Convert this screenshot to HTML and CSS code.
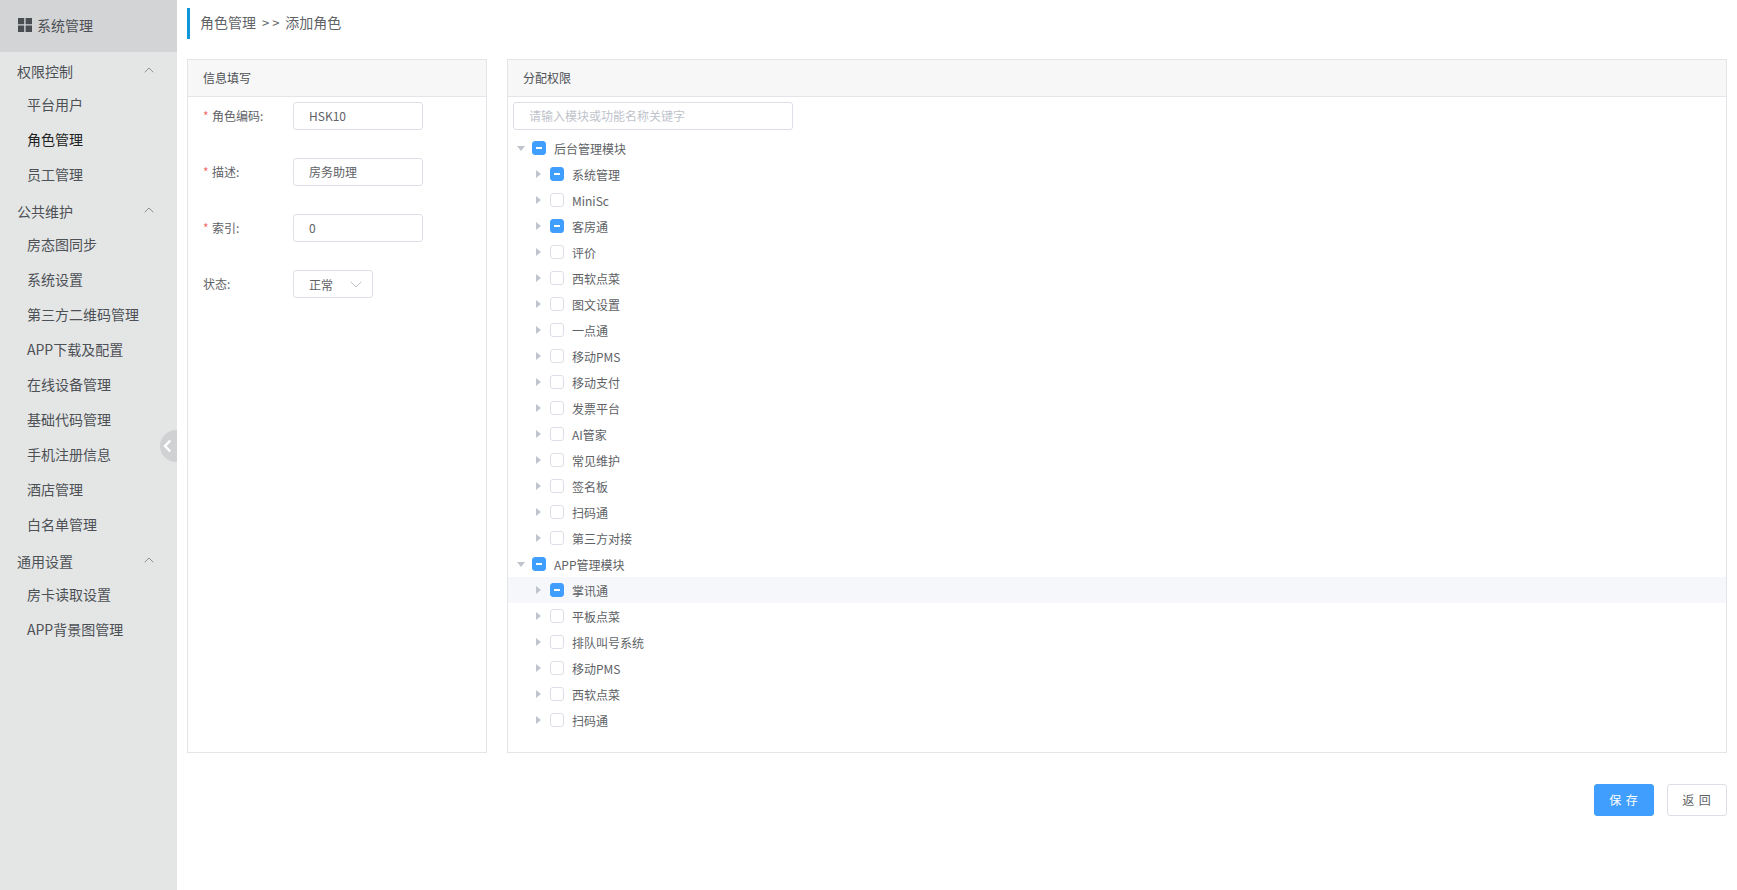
FILE: index.html
```html
<!DOCTYPE html>
<html lang="zh-CN">
<head>
    <meta charset="UTF-8">
    <title>添加角色</title>
    <link rel="stylesheet" href="styles.css">
</head>
<body>
    <!-- 左侧菜单 -->
    <aside class="sidebar">
        <div class="sidebar-head">
            <svg class="grid-icon" width="14" height="14" viewBox="0 0 14 14"><path d="M0 0h6.2v6.2H0zM7.6 0H14v6.2H7.6zM0 7.6h6.2V14H0zM7.6 7.6H14V14H7.6z" fill="#4a4d52"/></svg>
            <span>系统管理</span>
        </div>
        <nav class="menu">
            <div class="menu-group">权限控制<svg class="chevron" width="10" height="6" viewBox="0 0 10 6"><path d="M.7 5.3 5 1l4.3 4.3" fill="none" stroke="#8d9095"/></svg></div>
            <a class="menu-item">平台用户</a>
            <a class="menu-item active">角色管理</a>
            <a class="menu-item">员工管理</a>
            <div class="menu-group">公共维护<svg class="chevron" width="10" height="6" viewBox="0 0 10 6"><path d="M.7 5.3 5 1l4.3 4.3" fill="none" stroke="#8d9095"/></svg></div>
            <a class="menu-item">房态图同步</a>
            <a class="menu-item">系统设置</a>
            <a class="menu-item">第三方二维码管理</a>
            <a class="menu-item">APP下载及配置</a>
            <a class="menu-item">在线设备管理</a>
            <a class="menu-item">基础代码管理</a>
            <a class="menu-item">手机注册信息</a>
            <a class="menu-item">酒店管理</a>
            <a class="menu-item">白名单管理</a>
            <div class="menu-group">通用设置<svg class="chevron" width="10" height="6" viewBox="0 0 10 6"><path d="M.7 5.3 5 1l4.3 4.3" fill="none" stroke="#8d9095"/></svg></div>
            <a class="menu-item">房卡读取设置</a>
            <a class="menu-item">APP背景图管理</a>
        </nav>
        <div class="collapse-btn">
            <svg width="9" height="14" viewBox="0 0 9 14"><path d="M7.2 1.5 2 7l5.2 5.5" fill="none" stroke="#fff" stroke-width="2.4"/></svg>
        </div>
    </aside>

    <main class="main">
        <div class="crumb">角色管理<span class="crumb-sep">&gt; &gt;</span>添加角色</div>

        <div class="cards">
            <!-- 信息填写 -->
            <section class="card card-info">
                <div class="card-head">信息填写</div>
                <div class="form">
                    <div class="form-row">
                        <label class="form-label"><i>*</i>角色编码:</label>
                        <input class="text-input" type="text" value="HSK10">
                    </div>
                    <div class="form-row">
                        <label class="form-label"><i>*</i>描述:</label>
                        <input class="text-input" type="text" value="房务助理">
                    </div>
                    <div class="form-row">
                        <label class="form-label"><i>*</i>索引:</label>
                        <input class="text-input" type="text" value="0">
                    </div>
                    <div class="form-row">
                        <label class="form-label">状态:</label>
                        <div class="select">
                            <span>正常</span>
                            <svg width="12" height="7" viewBox="0 0 12 7"><path d="M.7.7 6 6l5.3-5.3" fill="none" stroke="#c0c4cc"/></svg>
                        </div>
                    </div>
                </div>
            </section>

            <!-- 分配权限 -->
            <section class="card card-tree">
                <div class="card-head">分配权限</div>
                <div class="search-wrap">
                    <input class="search-input" type="text" placeholder="请输入模块或功能名称关键字">
                </div>
                <ul class="tree">
                    <li class="tree-row top"><b class="arrow-down"></b><b class="check half"></b>后台管理模块</li>
                    <li class="tree-row"><b class="arrow-right"></b><b class="check half"></b>系统管理</li>
                    <li class="tree-row"><b class="arrow-right"></b><b class="check"></b>MiniSc</li>
                    <li class="tree-row"><b class="arrow-right"></b><b class="check half"></b>客房通</li>
                    <li class="tree-row"><b class="arrow-right"></b><b class="check"></b>评价</li>
                    <li class="tree-row"><b class="arrow-right"></b><b class="check"></b>西软点菜</li>
                    <li class="tree-row"><b class="arrow-right"></b><b class="check"></b>图文设置</li>
                    <li class="tree-row"><b class="arrow-right"></b><b class="check"></b>一点通</li>
                    <li class="tree-row"><b class="arrow-right"></b><b class="check"></b>移动PMS</li>
                    <li class="tree-row"><b class="arrow-right"></b><b class="check"></b>移动支付</li>
                    <li class="tree-row"><b class="arrow-right"></b><b class="check"></b>发票平台</li>
                    <li class="tree-row"><b class="arrow-right"></b><b class="check"></b>AI管家</li>
                    <li class="tree-row"><b class="arrow-right"></b><b class="check"></b>常见维护</li>
                    <li class="tree-row"><b class="arrow-right"></b><b class="check"></b>签名板</li>
                    <li class="tree-row"><b class="arrow-right"></b><b class="check"></b>扫码通</li>
                    <li class="tree-row"><b class="arrow-right"></b><b class="check"></b>第三方对接</li>
                    <li class="tree-row top"><b class="arrow-down"></b><b class="check half"></b>APP管理模块</li>
                    <li class="tree-row hover"><b class="arrow-right"></b><b class="check half"></b>掌讯通</li>
                    <li class="tree-row"><b class="arrow-right"></b><b class="check"></b>平板点菜</li>
                    <li class="tree-row"><b class="arrow-right"></b><b class="check"></b>排队叫号系统</li>
                    <li class="tree-row"><b class="arrow-right"></b><b class="check"></b>移动PMS</li>
                    <li class="tree-row"><b class="arrow-right"></b><b class="check"></b>西软点菜</li>
                    <li class="tree-row"><b class="arrow-right"></b><b class="check"></b>扫码通</li>
                </ul>
            </section>
        </div>

        <div class="actions">
            <button class="btn btn-primary">保 存</button>
            <button class="btn">返 回</button>
        </div>
    </main>
</body>
</html>
```

FILE: styles.css
```css
/* 通用 */
* {
    box-sizing: border-box;
}
html, body {
    height: 100%;
}
body {
    margin: 0;
    display: flex;
    font-family: "Noto Sans CJK SC", "Noto Sans", sans-serif;
    font-size: 12px;
    color: #606266;
    background-color: #ffffff;
    overflow: hidden;
}
/* 左侧菜单 */
.sidebar {
    position: relative;
    flex: 0 0 177px;
    background-color: #e4e6e6;
}
.sidebar-head {
    height: 52px;
    padding: 0 0 2px 18px;
    display: flex;
    align-items: center;
    gap: 5px;
    font-size: 14px;
    color: #4d5055;
    background-color: #d3d4d6;
}
.menu {
    padding-top: 1px;
}
.menu-group {
    height: 35px;
    padding: 0 23px 0 17px;
    display: flex;
    align-items: center;
    justify-content: space-between;
    font-size: 14px;
    color: #4d5055;
}
.chevron {
    margin-top: -2px;
}
.menu-item {
    display: block;
    height: 35px;
    line-height: 32px;
    padding-left: 27px;
    font-size: 14px;
    color: #4d5055;
}
.menu-item.active {
    color: #222222;
}
/* 折叠按钮 */
.collapse-btn {
    position: absolute;
    top: 430px;
    right: 0;
    width: 17px;
    height: 32px;
    padding-left: 3px;
    display: flex;
    align-items: center;
    background-color: #d0d1d3;
    border-radius: 16px 0 0 16px;
}
/* 主内容 */
.main {
    flex: 1;
    min-width: 0;
    padding: 8px 10px 0;
}
.crumb {
    height: 31px;
    padding-left: 10px;
    line-height: 29px;
    font-size: 14px;
    color: #606266;
    border-left: 3px solid #1296db;
}
.crumb-sep {
    margin: 0 6px 0 6px;
    font-size: 13px;
}
.cards {
    margin-top: 20px;
    display: flex;
    gap: 20px;
    height: 694px;
}
.card {
    border: 1px solid #e3e5e8;
    background-color: #ffffff;
}
.card-info {
    flex: 0 0 300px;
}
.card-tree {
    flex: 1;
    min-width: 0;
}
.card-head {
    height: 37px;
    padding-left: 15px;
    line-height: 35px;
    color: #4d5055;
    background-color: #f7f7f7;
    border-bottom: 1px solid #e3e5e8;
}
/* 表单 */
.form {
    padding: 5px 0 0 15px;
}
.form-row {
    height: 56px;
    display: flex;
    align-items: flex-start;
}
.form-label {
    flex: 0 0 90px;
    height: 28px;
    line-height: 28px;
    color: #606266;
}
.form-label i {
    display: inline-block;
    width: 9px;
    font-style: normal;
    color: #f56c6c;
}
.text-input, .select, .search-input {
    height: 28px;
    border: 1px solid #dcdfe6;
    border-radius: 3px;
    font-family: inherit;
    font-size: 12px;
    color: #606266;
    background-color: #ffffff;
    outline: none;
}
.text-input {
    width: 130px;
    padding: 0 15px 2px;
}
.select {
    width: 80px;
    padding: 0 10px 0 15px;
    display: flex;
    align-items: center;
    justify-content: space-between;
}
/* 权限树 */
.search-wrap {
    padding: 5px 0 0 5px;
}
.search-input {
    width: 280px;
    padding: 0 15px 2px;
}
.search-input::placeholder {
    color: #c0c4cc;
}
.tree {
    list-style: none;
    margin: 5px 0 0;
    padding: 0;
}
.tree-row {
    height: 26px;
    padding-left: 28px;
    display: flex;
    align-items: center;
    color: #606266;
}
.tree-row.top {
    padding-left: 9px;
}
.tree-row.hover {
    background-color: #f5f7fa;
}
.arrow-right {
    width: 0;
    height: 0;
    margin-right: 9px;
    border-top: 4px solid transparent;
    border-bottom: 4px solid transparent;
    border-left: 5px solid #c0c4cc;
}
.arrow-down {
    width: 0;
    height: 0;
    margin-right: 7px;
    border-left: 4px solid transparent;
    border-right: 4px solid transparent;
    border-top: 5px solid #c0c4cc;
}
.check {
    position: relative;
    flex: 0 0 14px;
    height: 14px;
    margin-right: 8px;
    border: 1px solid #dcdfe6;
    border-radius: 3px;
    background-color: #ffffff;
}
.check.half {
    border-color: #409eff;
    background-color: #409eff;
}
.check.half::before {
    content: "";
    position: absolute;
    top: 5px;
    left: 3px;
    width: 6px;
    height: 2px;
    background-color: #ffffff;
}
/* 底部按钮 */
.actions {
    margin-top: 31px;
    display: flex;
    justify-content: flex-end;
    gap: 13px;
}
.btn {
    width: 60px;
    height: 32px;
    padding: 0 0 2px;
    font-family: inherit;
    font-size: 12px;
    letter-spacing: 1px;
    color: #606266;
    background-color: #ffffff;
    border: 1px solid #dcdfe6;
    border-radius: 3px;
}
.btn-primary {
    color: #ffffff;
    background-color: #409eff;
    border-color: #409eff;
}
```
